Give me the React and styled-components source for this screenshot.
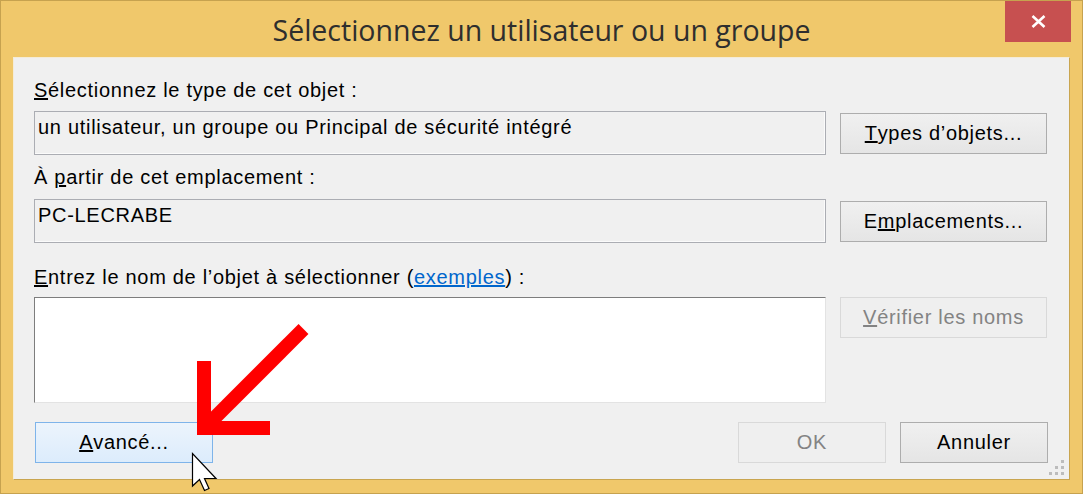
import styled, { createGlobalStyle } from "styled-components";

const GlobalStyle = createGlobalStyle`
  html, body {
    margin: 0;
    padding: 0;
    overflow: hidden;
    background: #efc86b;
  }
`;

const Window = styled.div`
  position: relative;
  width: 1083px;
  height: 494px;
  box-sizing: border-box;
  border: 1px solid #c6a24f;
  background: #f0c86b;
  display: flex;
  flex-direction: column;
`;

const TitleBar = styled.div`
  height: 56px;
  display: grid;
  grid-template-columns: 1fr auto 1fr;
  align-items: start;
`;

const Title = styled.div`
  grid-column: 2;
  margin-top: 10px;
  font-family: "Open Sans", "Noto Sans", sans-serif;
  font-size: 28.5px;
  line-height: 38px;
  color: #2e2e2e;
  white-space: nowrap;
`;

const CloseButton = styled.div`
  grid-column: 3;
  justify-self: end;
  margin-right: 11px;
  width: 66px;
  height: 41px;
  background: #c75050;
  display: flex;
  align-items: center;
  justify-content: center;
`;

const Client = styled.div`
  flex: 1;
  position: relative;
  margin: 0 12px 13px 12px;
  padding: 20px 22px 0 20px;
  background: #f0f0f0;
  border: 1px solid #c9a550;
  border-top-color: #f4ecd8;
  border-left-color: #f4ecd8;
  display: flex;
  flex-direction: column;
  font-family: "Liberation Sans", Arial, sans-serif;
  font-size: 20px;
  letter-spacing: 0.7px;
  color: #000;
`;

const Label = styled.div`
  height: 24px;
  line-height: 24px;
  margin-top: ${(p) => p.$top || 0}px;
  white-space: nowrap;
`;

const Row = styled.div`
  display: grid;
  grid-template-columns: 1fr 207px;
  column-gap: 14px;
  align-items: ${(p) => (p.$top ? "start" : "center")};
  margin-top: ${(p) => p.$gap || 0}px;
`;

const ReadField = styled.div`
  height: 44px;
  box-sizing: border-box;
  padding: 3px 3px;
  line-height: 24px;
  border: 1px solid #abadb3;
  box-shadow: inset -1px -1px 0 #fbfbfb;
  background: #f0f0f0;
  white-space: nowrap;
`;

const NameBox = styled.div`
  height: 106px;
  box-sizing: border-box;
  background: #fff;
  border: 1px solid #e3e3e3;
  border-top-color: #7d7d7d;
  border-left-color: #7d7d7d;
`;

const Button = styled.div`
  height: 41px;
  box-sizing: border-box;
  width: ${(p) => (p.$width ? `${p.$width}px` : "auto")};
  display: flex;
  align-items: center;
  justify-content: center;
  border: 1px solid ${(p) => (p.$hot ? "#7eb4ea" : p.$disabled ? "#d9d9d9" : "#adadad")};
  background: ${(p) =>
    p.$hot
      ? "linear-gradient(#ecf4fc, #dcecfc)"
      : p.$disabled
      ? "#efefef"
      : "linear-gradient(#f0f0f0, #e5e5e5)"};
  color: ${(p) => (p.$disabled ? "#838383" : "#000")};
  white-space: nowrap;
`;

const Link = styled.a`
  color: #0066cc;
  text-decoration: underline;
`;

const Footer = styled.div`
  display: flex;
  align-items: center;
  margin-top: 19px;
  padding-left: 1px;
`;

const Spacer = styled.div`
  flex: 1;
`;

const Actions = styled.div`
  display: flex;
  gap: 14px;
  margin-right: -1px;
`;

const Grip = styled.svg`
  position: absolute;
  right: 4px;
  bottom: 3px;
`;

const Pointer = styled.svg`
  position: absolute;
  left: 190px;
  top: 315px;
  pointer-events: none;
  overflow: visible;
`;

const Cursor = styled.svg`
  position: absolute;
  left: 191px;
  top: 452px;
  pointer-events: none;
  overflow: visible;
`;

export default function App() {
  return (
    <>
      <GlobalStyle />
      <Window>
        <TitleBar>
          <Title>Sélectionnez un utilisateur ou un groupe</Title>
          <CloseButton>
            <svg width="15" height="13" viewBox="0 0 15 13">
              <path d="M1.5 1 L13.5 12 M13.5 1 L1.5 12" stroke="#fff" strokeWidth="2.6" />
            </svg>
          </CloseButton>
        </TitleBar>

        <Client>
          <Label>
            <u>S</u>électionnez le type de cet objet :
          </Label>
          <Row $gap={9}>
            <ReadField>un utilisateur, un groupe ou Principal de sécurité intégré</ReadField>
            <Button>
              <u>T</u>ypes d’objets...
            </Button>
          </Row>

          <Label $top={10}>
            À <u>p</u>artir de cet emplacement :
          </Label>
          <Row $gap={10}>
            <ReadField>PC-LECRABE</ReadField>
            <Button>
              E<u>m</u>placements...
            </Button>
          </Row>

          <Label $top={22}>
            <u>E</u>ntrez le nom de l’objet à sélectionner (<Link>exemples</Link>) :
          </Label>
          <Row $gap={8} $top>
            <NameBox />
            <Button $disabled>
              <u>V</u>érifier les noms
            </Button>
          </Row>

          <Footer>
            <Button $hot $width={178}>
              <u>A</u>vancé...
            </Button>
            <Spacer />
            <Actions>
              <Button $disabled $width={148}>
                OK
              </Button>
              <Button $width={148}>Annuler</Button>
            </Actions>
          </Footer>

          <Grip width="16" height="16" viewBox="0 0 16 16">
            <g fill="#bcbcbc">
              <rect x="12" y="0" width="3" height="3" />
              <rect x="6" y="6" width="3" height="3" />
              <rect x="12" y="6" width="3" height="3" />
              <rect x="0" y="12" width="3" height="3" />
              <rect x="6" y="12" width="3" height="3" />
              <rect x="12" y="12" width="3" height="3" />
            </g>
          </Grip>
        </Client>

        {/* red call-out arrow towards the Avancé button */}
        <Pointer width="125" height="125" viewBox="0 0 125 125">
          <path d="M112.5 13 L18 107.5" stroke="#ff0000" strokeWidth="14" fill="none" />
          <path
            d="M13 45 L13 112 L79 112"
            stroke="#ff0000"
            strokeWidth="14"
            strokeLinejoin="miter"
            fill="none"
          />
        </Pointer>

        <Cursor width="26" height="40" viewBox="0 0 26 40">
          <path
            d="M0.5 0.5 L0.5 33 L7.5 26.5 L12.5 37.5 L17 35.5 L12.5 25.5 L24 25.5 Z"
            fill="#fff"
            stroke="#000"
            strokeWidth="1.2"
            strokeLinejoin="miter"
          />
        </Cursor>
      </Window>
    </>
  );
}
